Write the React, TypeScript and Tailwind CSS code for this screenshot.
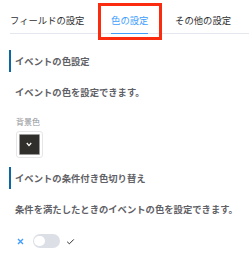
import React from "react";

const font = { fontFamily: '"Noto Sans CJK JP", "Noto Sans", sans-serif' };

function SectionHeader({ title }: { title: string }) {
  return (
    <div className="flex h-[22px] items-center border-l-2 border-[#0b68a3] pl-[4px] text-[9.33px] font-semibold text-[#5f6166]">
      {title}
    </div>
  );
}

export default function App() {
  const tabs = ["フィールドの設定", "色の設定", "その他の設定"];
  const active = 1;

  return (
    <div className="relative h-[261px] w-[249px] overflow-hidden bg-white" style={font}>
      {/* tabs */}
      <div className="pl-[10px] pt-[6px]">
        <div className="flex border-b-[1.33px] border-[#e4e7ed]">
          {tabs.map((tab, i) => (
            <div
              key={tab}
              className={`relative flex h-[27px] shrink-0 items-center whitespace-nowrap text-[9.33px] ${
                i === 0 ? "pr-[13.33px]" : i === tabs.length - 1 ? "pl-[13.33px]" : "px-[13.33px]"
              } ${i === active ? "text-[#409eff]" : "text-[#303133]"}`}
            >
              {tab}
              {i === active && (
                <span className="absolute bottom-[-1.33px] left-[13.33px] right-[13.33px] h-[1.33px] bg-[#409eff]" />
              )}
            </div>
          ))}
        </div>
      </div>

      {/* annotation box */}
      <div className="absolute left-[98px] top-[3px] h-[37px] w-[64px] border-[3px] border-[#fb2b10]" />

      <div className="flex flex-col pl-[9px]">
        <div className="mt-[16px]">
          <SectionHeader title="イベントの色設定" />
        </div>
        <div className="mt-[13px] h-[14px] pl-[6px] text-[9.33px] leading-[14px] font-semibold text-[#5f6166]">
          イベントの色を設定できます。
        </div>
        <div className="mt-[17px] h-[12px] pl-[7px] text-[8px] leading-[12px] text-[#909399]">
          背景色
        </div>
        <div className="ml-[7px] mt-[3px] flex h-[27px] w-[26.67px] items-center justify-center rounded-[3px] border border-[#e6e6e6]">
          <div className="flex h-[21px] w-[20.5px] items-center justify-center rounded-[1px] border border-[#999] bg-[#302f2c]">
            <svg width="6" height="5" viewBox="0 0 6 5">
              <path d="M0.8 1 L3 3.6 L5.2 1" fill="none" stroke="#fff" strokeWidth="1.3" />
            </svg>
          </div>
        </div>

        <div className="mt-[9px]">
          <SectionHeader title="イベントの条件付き色切り替え" />
        </div>
        <div className="mt-[13px] h-[14px] pl-[6px] text-[9.33px] leading-[14px] font-semibold text-[#5f6166]">
          条件を満たしたときのイベントの色を設定できます。
        </div>
        <div className="mt-[18px] flex h-[14px] items-center pl-[7px]">
          <svg width="9" height="9" viewBox="0 0 9 9">
            <path d="M2 2 L7 7 M7 2 L2 7" stroke="#409eff" strokeWidth="1.4" />
          </svg>
          <div className="ml-[8px] flex h-[13.33px] w-[26.67px] items-center rounded-full bg-[#dcdfe6] pl-[1.33px]">
            <div className="h-[10.67px] w-[10.67px] rounded-full bg-white" />
          </div>
          <svg className="ml-[6px]" width="9" height="9" viewBox="0 0 9 9">
            <path d="M1.2 4.8 L3.4 6.8 L7.8 2.4" fill="none" stroke="#303133" strokeWidth="1" />
          </svg>
        </div>
      </div>
    </div>
  );
}
